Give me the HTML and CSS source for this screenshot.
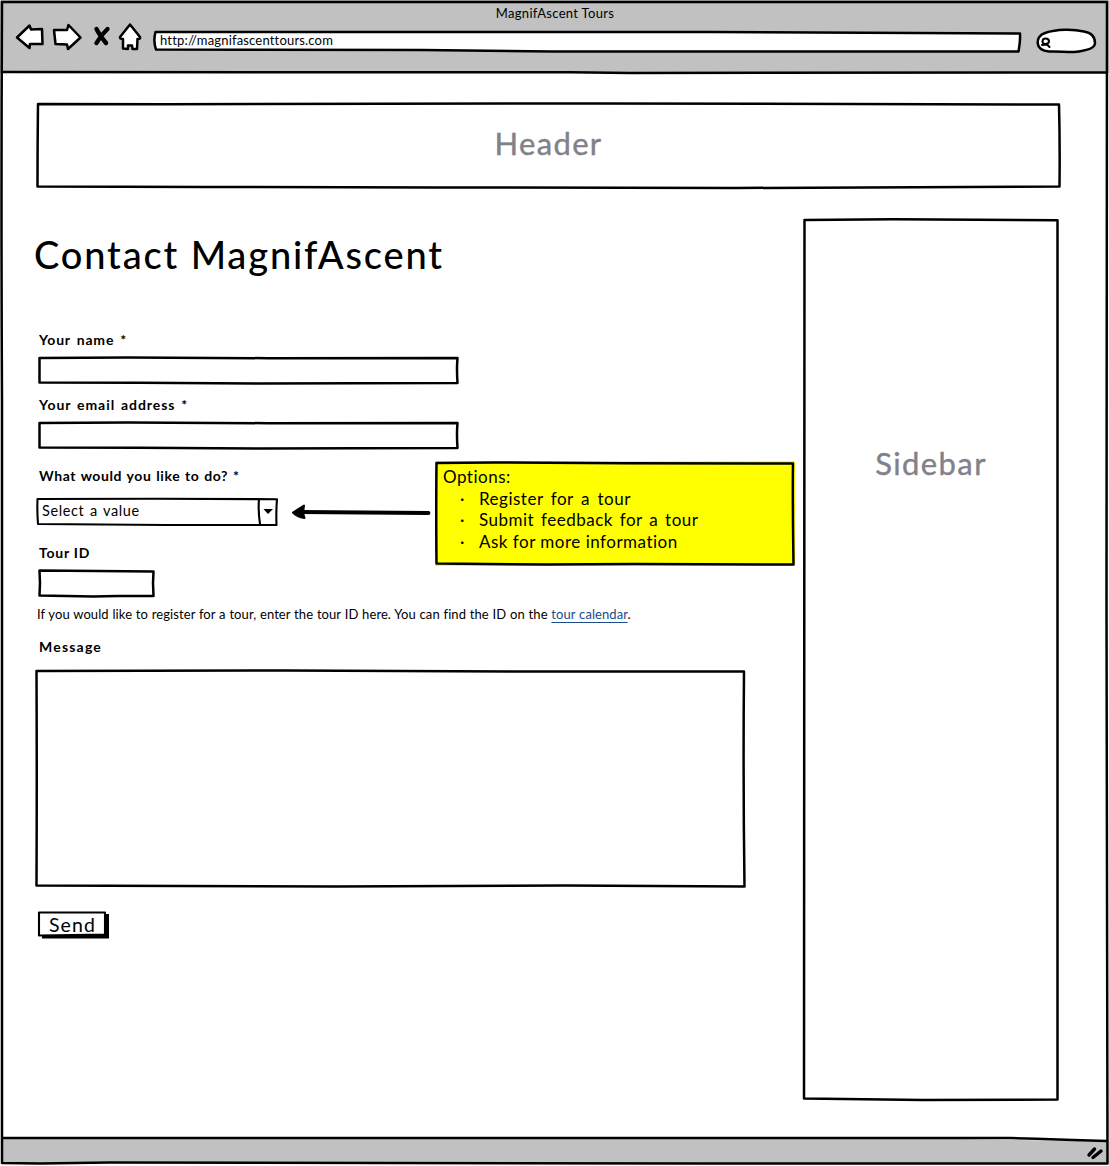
FILE: index.html
```html
<!DOCTYPE html>
<html lang="en">
<head>
<meta charset="utf-8">
<title>MagnifAscent Tours</title>
<link rel="stylesheet" href="styles.css">
</head>
<body>
<div class="window">
  <header class="chrome">
    <div class="window-title"><span>MagnifAscent Tours</span></div>
    <div class="toolbar">
      <svg class="nav-icons" width="130" height="32" viewBox="14 21 130 32">
        <g class="ink paper">
          <path d="M17 37.500 L29.500 25.500 L31 29.500 L42 29 L42.500 44 L30 44 L29.500 48 Z"/>
          <path d="M80.500 37.500 L68.500 25 L67 30 L54 30 L55.500 44 L67 44.500 L68 49 Z"/>
          <path d="M130 24.500 L120 37 Q119.500 39 123 39 L123 48.500 L128 49 L128 45.500 L132 45.500 L132.500 49 L137 49 L137.500 39 Q141 39 140 37 Z"/>
        </g>
        <path class="cross" d="M96.500 29 Q99.500 35 106 43 M107.500 29 Q101 35 96.500 43"/>
      </svg>
      <div class="address">
        <svg class="frame" viewBox="0 0 870 23"><path class="ink paper" d="M3.500 2 L560 2 L868 3.500 Q868.500 10 866.500 21.500 L400 21.500 L270 20 L4 19.500 Q1 11 3.500 2 Z"/></svg>
        <span>http://magnifascenttours.com</span>
      </div>
      <svg class="search" width="62" height="27" viewBox="1035 27 62 27">
        <path class="ink paper" d="M1049 51.500 C1034 50 1035 36 1045 33 C1057 29 1073 29 1084 31.500 C1093 33 1095 38 1095 43 C1095 49 1085 51 1074 52 C1064 52 1056 51 1049 51.500 Z"/>
        <path class="ink lens" d="M1042.500 41.500 Q1042.500 38.500 1045.500 38.500 Q1049 38.500 1049 41.500 Q1048.500 44 1045.500 44 Q1042.500 44 1042.500 41.500 M1042 45 L1047 44.500 L1049.500 47"/>
      </svg>
    </div>
  </header>

  <div class="page">
    <div class="banner">
      <svg class="frame" viewBox="0 0 1025 87"><path class="ink" d="M2 2 L130 2.200 L560 1.400 L1023 2.500 Q1024 40 1023.500 84.500 L700 86 L400 85.500 L170 85 L1.500 84.500 Q1.500 45 2 2 Z"/></svg>
      <span>Header</span>
    </div>

    <div class="columns">
      <main class="contact">
        <h1>Contact MagnifAscent</h1>
        <label class="t-name" for="name">Your name *</label>
        <div class="field wide" id="name">
          <svg class="frame" viewBox="0 0 421 29"><path class="ink" d="M1.500 2 L90 1.400 L230 2.200 L419.500 2 Q418.500 13 419.500 27 L220 27.500 L100 26.800 L1.500 26.500 Z"/></svg>
        </div>
        <label class="t-email" for="email">Your email address *</label>
        <div class="field wide" id="email">
          <svg class="frame" viewBox="0 0 421 29"><path class="ink" d="M1.500 2 L90 1.400 L230 2.200 L419.500 2 Q418.500 13 419.500 27 L220 27.500 L100 26.800 L1.500 26.500 Z"/></svg>
        </div>

        <div class="choice-row">
          <div class="choices">
            <label class="t-what" for="action">What would you like to do? *</label>
            <div class="select" id="action">
              <svg class="frame" viewBox="0 0 242 29"><path class="ink thin" d="M1.500 2 L120 1.800 L241 2.200 Q240 14 240.500 28 L130 28 L2 27 Q1 14 1.500 2 Z M223 2 Q222 14 224 27"/><path class="arrowhead" d="M227.500 12 L237 12 L232 17 Z"/></svg>
              <span>Select a value</span>
            </div>
            <label class="t-id" for="tour-id">Tour ID</label>
            <div class="field short" id="tour-id">
              <svg class="frame" viewBox="0 0 117 29"><path class="ink" d="M1.500 1.600 L115.500 2.500 Q114.500 14 115.500 27 L80 27 L55 27.500 L1.500 26.500 Q2.500 14 1.500 1.600 Z"/></svg>
            </div>
          </div>
          <svg class="pointer" width="142" height="20" viewBox="290 502 142 20">
            <path class="shaft" d="M300 512 L428.500 513"/>
            <path class="tip" d="M293 512.500 L304 505.500 L303 513 L304.500 518 Q297 517 293 512.500 Z"/>
          </svg>
          <aside class="note">
            <svg class="frame" viewBox="0 0 360 105"><path class="ink" d="M1.500 2 L60 1.500 L190 2.300 L358 2.500 Q357.500 35 358.500 103.500 L200 103 L110 103.500 L1.500 102.500 Q1 45 1.500 2 Z"/></svg>
            <p>Options:</p>
            <ul>
              <li class="o1">Register for a tour</li>
              <li class="o2">Submit feedback for a tour</li>
              <li class="o3">Ask for more information</li>
            </ul>
          </aside>
        </div>

        <p class="hint">If you would like to register for a tour, enter the tour ID here. You can find the ID on the <a>tour calendar</a>.</p>
        <label class="t-message" for="message">Message</label>
        <div class="message" id="message">
          <svg class="frame" viewBox="0 0 711 219"><path class="ink" d="M1.500 2 L250 1.500 L500 2.500 L709 2.500 Q708 110 709.500 217.500 L530 216.500 L300 217.500 L1.500 216.500 Q2 110 1.500 2 Z"/></svg>
        </div>
        <button class="send" type="button">
          <svg class="frame" viewBox="0 0 71 28"><path class="shadow" d="M4 23 L66 23 L66 3 L71 3 L71 27.500 L4 27.500 Z"/><path class="ink paper thin" d="M1 1.500 L67 1.500 L67 23.500 L1 24.500 Z"/></svg>
          <span>Send</span>
        </button>
      </main>

      <aside class="sidebar">
        <svg class="frame" viewBox="0 0 256 883"><path class="ink" d="M1.500 2 L90 1.300 L254.500 2.200 Q253.500 350 254.500 881.500 L120 882 L1 880.500 Q2.500 500 1.500 2 Z"/></svg>
        <span>Sidebar</span>
      </aside>
    </div>
  </div>

  <footer class="status"></footer>
  <svg class="window-frame" width="1109" height="1166" viewBox="0 0 1109 1166">
    <path class="status-fill" d="M3 1138 L900 1138 L1107 1141.500 L1107 1163 L3 1163 Z"/>
    <path class="ink" d="M2 2 L1107 2 Q1106 300 1106.500 600 L1107.500 1163.500 L700 1163.500 L110 1162.500 L40 1163.500 L2 1163 Q3.500 700 2 400 Q1 200 2 2 Z M3 72 L570 72.300 L630 73 L1106 72.300 M3 1138 L1010 1138 Q1050 1139 1107 1141"/>
    <path class="grip" d="M1094.500 1149 L1089 1155 M1101 1151 L1093 1157.500"/>
  </svg>
</div>
</body>
</html>
```
FILE: styles.css
```css
* { box-sizing: border-box; }
body {
  margin: 0;
  background: #fff;
  color: #000;
  font-family: Lato, "Open Sans", sans-serif;
  font-variant-ligatures: none;
}
h1, p, ul { margin: 0; padding: 0; }

.window {
  position: relative;
  display: flex;
  flex-direction: column;
  width: 1109px;
  height: 1166px;
}
.window-frame {
  position: absolute;
  inset: 0;
  pointer-events: none;
}
.frame {
  position: absolute;
  inset: 0;
  width: 100%;
  height: 100%;
  overflow: visible;
}
.frame ~ * { position: relative; }

.ink {
  fill: none;
  stroke: #000;
  stroke-width: 2.5;
  stroke-linejoin: round;
  stroke-linecap: round;
}
.paper { fill: #fff; }
.thin { stroke-width: 2.1; }
.lens { stroke-width: 2; }
.cross, .grip, .shaft {
  fill: none;
  stroke: #000;
  stroke-width: 4.4;
  stroke-linecap: round;
}
.grip { stroke-width: 3.4; }
.shaft { stroke-width: 3.8; }
.tip { stroke: #000; stroke-width: 2; stroke-linejoin: round; }
.status-fill { fill: #c1c1c1; }

/* browser chrome */
.chrome {
  height: 73px;
  padding: 4px 12px 0 14px;
  background: #c1c1c1;
}
.window-title {
  height: 17px;
  padding-right: 1px;
  font-size: 13px;
  line-height: 18px;
  text-align: center;
  letter-spacing: .33px;
}
.toolbar { display: flex; align-items: flex-start; }
.address {
  position: relative;
  width: 870px;
  height: 23px;
  margin: 9px 13px 0 8px;
  padding-left: 8px;
  font-size: 13px;
  line-height: 20px;
  letter-spacing: .18px;
}
.search { margin-top: 6px; }

/* page */
.page { flex: 1; padding: 29px 48px 0 36px; }
.banner {
  position: relative;
  width: 1025px;
  height: 87px;
  color: #81818a;
  font-size: 31px;
  line-height: 82px;
  letter-spacing: 1.3px;
  text-align: center;
  -webkit-text-stroke: .4px;
}
.columns {
  display: flex;
  justify-content: space-between;
  width: 1023px;
  margin-top: 29px;
}
.contact { display: flex; flex-direction: column; align-items: flex-start; }
h1 {
  margin: 14px 0 54px -2px;
  font-size: 38px;
  font-weight: 500;
  line-height: 44px;
  letter-spacing: 1.85px;
  white-space: nowrap;
}
label {
  display: block;
  height: 20px;
  margin-left: 3px;
  font-size: 14px;
  font-weight: 700;
  line-height: 20px;
  white-space: nowrap;
}
.t-name { letter-spacing: .8px; word-spacing: 2px; }
.t-email { letter-spacing: .95px; word-spacing: 1.5px; }
.t-what { letter-spacing: .6px; word-spacing: .8px; }
.t-id { letter-spacing: .75px; }
.t-message { letter-spacing: 1.2px; }
.field { position: relative; height: 29px; margin: 6px 0 10px 2px; }
.wide { width: 421px; }
.short { width: 117px; margin-bottom: 0; }

.choice-row { display: flex; align-items: flex-start; margin-top: 1px; }
.choices { width: 242px; padding-top: 5px; }
.select {
  position: relative;
  height: 29px;
  margin: 11px 0 17px;
  padding-left: 6px;
  font-size: 14.5px;
  line-height: 28px;
  letter-spacing: .6px;
  word-spacing: 1.3px;
}
.pointer { margin: 41px 3px 0 12px; }
.note {
  position: relative;
  width: 360px;
  height: 105px;
  padding: 5px 8px;
  background: #ff0;
  font-size: 17px;
  line-height: 21.6px;
  letter-spacing: .5px;
  white-space: nowrap;
}
.note ul { list-style: none; }
.note li { padding-left: 36px; }
.note li::before {
  content: "·";
  display: inline-block;
  width: 19px;
  margin-left: -19px;
}
.o1 { word-spacing: 2.7px; }
.o2 { word-spacing: 2px; }
.hint {
  margin: 6px 0 13px 1px;
  font-size: 13px;
  line-height: 20px;
  letter-spacing: .08px;
  word-spacing: .35px;
  white-space: nowrap;
}
.hint a {
  color: #194c8c;
  text-decoration: underline;
  text-underline-offset: 3px;
}
.message { position: relative; width: 711px; height: 219px; margin: 12px 0 23px -1px; }
.send {
  position: relative;
  width: 71px;
  height: 28px;
  margin-left: 2px;
  padding: 0 2px 1px 0;
  border: 0;
  background: none;
  font: 19.5px/26px Lato, "Open Sans", sans-serif;
  letter-spacing: 1.1px;
}
.sidebar {
  position: relative;
  width: 256px;
  height: 883px;
  padding-top: 225px;
  color: #81818a;
  font-size: 31px;
  line-height: 40px;
  letter-spacing: 1.4px;
  text-align: center;
  -webkit-text-stroke: .4px;
}
.status { height: 28px; }
```
